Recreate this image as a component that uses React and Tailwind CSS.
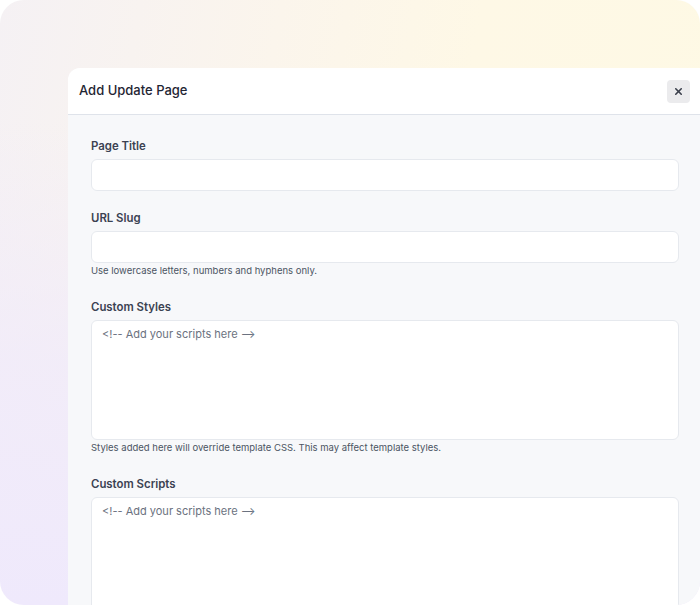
import { X } from "lucide-react";

const Field = ({ label, help, tall, placeholder }) => (
  <div>
    <label className="mb-[5px] block text-[11.4px] font-semibold leading-[16px] text-[#3b4252]">
      {label}
    </label>

    {tall ? (
      <textarea
        placeholder={placeholder}
        className="block h-[120px] w-full resize-none rounded-md border border-[#e6e9ee] bg-white px-[10px] pt-[5px] text-[11px] leading-[16px] text-[#374151] placeholder:text-[#6b7280] outline-none"
      />
    ) : (
      <input
        type="text"
        className="block h-[32px] w-full rounded-md border border-[#e6e9ee] bg-white px-[10px] text-[12px] outline-none"
      />
    )}

    {help && (
      <p className="mt-[2px] text-[9.5px] leading-[12px] text-[#4b5563]">
        {help}
      </p>
    )}
  </div>
);

export default function App() {
  return (
    <div
      className="h-[606px] w-[700px] bg-white"
      style={{ fontFamily: "Inter, 'Noto Sans', sans-serif" }}
    >
      <div className="h-[605px] w-[700px] overflow-hidden rounded-[24px] bg-[linear-gradient(to_top,#efe9fc_0%,rgba(240,234,251,0.75)_40%,rgba(240,234,251,0)_80%),linear-gradient(100deg,#f5f1f4_0%,#fbf5ec_35%,#fef8e6_60%,#fef9e4_100%)] pl-[68px] pt-[68px]">
        <div className="h-full w-[634px] overflow-hidden rounded-tl-[12px] bg-[#f7f8fa]">
          {/* Header */}
          <div className="flex h-[47px] items-center justify-between border-b border-[#dfe3ea] bg-white pl-[11px] pr-[12px]">
            <h2 className="text-[13px] font-medium text-[#1f2533]">
              Add Update Page
            </h2>

            <button className="flex h-[23px] w-[23px] items-center justify-center rounded-[4px] bg-[#ebebed] text-[#3a3f4b]">
              <X size={11} strokeWidth={3.5} />
            </button>
          </div>

          {/* Body */}
          <div className="flex flex-col px-[23px] pt-[23px]">
            <div className="mb-[19px]">
              <Field label="Page Title" />
            </div>

            <div className="mb-[22px]">
              <Field
                label="URL Slug"
                help="Use lowercase letters, numbers and hyphens only."
              />
            </div>

            <div className="mb-[22px]">
              <Field
                label="Custom Styles"
                tall
                placeholder="<!-- Add your scripts here -->"
                help="Styles added here will override template CSS. This may affect template styles."
              />
            </div>

            <Field
              label="Custom Scripts"
              tall
              placeholder="<!-- Add your scripts here -->"
            />
          </div>
        </div>
      </div>
    </div>
  );
}
